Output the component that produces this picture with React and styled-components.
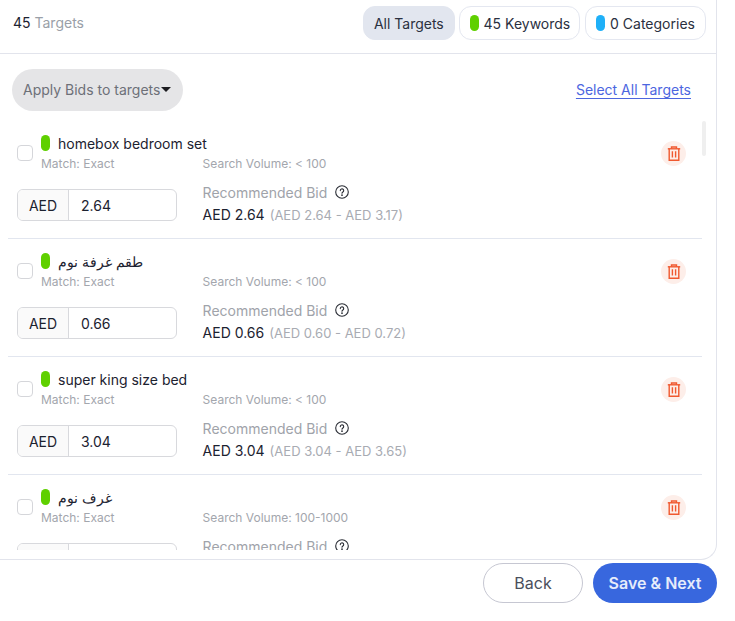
import React from "react";
import styled, { createGlobalStyle } from "styled-components";

const Global = createGlobalStyle`
  html, body { margin: 0; padding: 0; background: #fff; }
  * { box-sizing: border-box; }
  body { font-family: Inter, "Noto Sans", "Liberation Sans", sans-serif; color: #1c2230; overflow: hidden; }
`;

const Page = styled.div`
  width: 735px;
  height: 621px;
`;

const Panel = styled.div`
  width: 717px;
  height: 560px;
  display: flex;
  flex-direction: column;
  padding-bottom: 9px;
  border-right: 1px solid #e2e4ec;
  border-bottom: 1px solid #e2e4ec;
  border-bottom-right-radius: 16px;
  overflow: hidden;
  position: relative;
`;

const Header = styled.div`
  height: 54px;
  flex: none;
  display: flex;
  align-items: flex-start;
  justify-content: space-between;
  padding: 6px 10px 0 13px;
  border-bottom: 1px solid #e2e4ec;
`;

const Count = styled.div`
  font-size: 14px;
  line-height: 34px;
  color: #1c2230;
  span { color: #9a9fa8; }
`;

const Tabs = styled.div`
  display: flex;
  gap: 4.6px;
`;

const Tab = styled.div`
  height: 34px;
  width: ${(p) => p.$w}px;
  display: flex;
  align-items: center;
  justify-content: center;
  gap: 5px;
  font-size: 14px;
  border-radius: 12px;
  color: #2a3040;
  background: ${(p) => (p.$active ? "#e2e6ef" : "#fff")};
  border: 1px solid ${(p) => (p.$active ? "#e2e6ef" : "#e4e7f0")};
`;

const Dot = styled.i`
  display: block;
  flex: none;
  width: 9px;
  height: 16px;
  border-radius: 5px;
  background: ${(p) => p.$c};
`;

const Toolbar = styled.div`
  height: 67px;
  flex: none;
  display: flex;
  align-items: center;
  justify-content: space-between;
  padding: 4px 25px 0 12px;
`;

const ApplyButton = styled.div`
  width: 171px;
  height: 42px;
  border-radius: 21px;
  background: #e5e5e7;
  display: flex;
  align-items: center;
  padding-left: 11px;
  font-size: 14px;
  color: #6d7078;
`;

const Caret = styled.span`
  width: 0;
  height: 0;
  margin-left: 1px;
  border-left: 5px solid transparent;
  border-right: 5px solid transparent;
  border-top: 5px solid #1c1c20;
`;

const SelectAll = styled.a`
  font-size: 14px;
  color: #4c66df;
  text-decoration: underline;
  text-underline-offset: 3px;
`;

const List = styled.div`
  flex: 1;
  min-height: 0;
  overflow: hidden;
  padding-left: 8px;
`;

const Row = styled.div`
  width: 694px;
  height: 118px;
  flex: none;
  display: flex;
  justify-content: space-between;
  padding: 11px 16px 0 9px;
  border-bottom: 1px solid #e2e6ef;
`;

const RowMain = styled.div`
  display: flex;
  flex-direction: column;
`;

const TopBlock = styled.div`
  display: flex;
  gap: 8px;
`;

const Checkbox = styled.span`
  width: 16px;
  height: 16px;
  margin-top: 13px;
  border: 1px solid #d5d6da;
  border-radius: 4px;
  background: #fff;
`;

const NameLine = styled.div`
  display: flex;
  align-items: center;
  gap: 8px;
  height: 22px;
  font-size: 14px;
  color: #1c2230;
`;

const Meta = styled.div`
  display: grid;
  grid-template-columns: 161.6px auto;
  margin-top: 1px;
  font-size: 12px;
  line-height: 18px;
  color: #a3a6ad;
`;

const BottomBlock = styled.div`
  display: flex;
  gap: 25.6px;
  margin-top: 9px;
`;

const BidInput = styled.div`
  width: 160px;
  height: 32px;
  margin-top: 7px;
  display: flex;
  border: 1px solid #d8d9dd;
  border-radius: 6px;
  font-size: 14px;
  overflow: hidden;
`;

const Prefix = styled.div`
  width: 51px;
  display: flex;
  align-items: center;
  justify-content: center;
  background: #fafafa;
  border-right: 1px solid #d8d9dd;
  color: #1c2230;
`;

const Value = styled.div`
  flex: 1;
  display: flex;
  align-items: center;
  padding-left: 12px;
  color: #1c2230;
`;

const RecBlock = styled.div`
  display: flex;
  flex-direction: column;
`;

const RecTitle = styled.div`
  display: flex;
  align-items: center;
  gap: 8px;
  height: 20px;
  font-size: 14px;
  color: #a0a3aa;
`;

const RecValue = styled.div`
  display: flex;
  align-items: baseline;
  gap: 5px;
  height: 24px;
  margin-top: 1px;
  line-height: 24px;
  font-size: 14px;
  color: #1c2230;
  span { font-size: 13px; color: #a8abb2; }
`;

const TrashButton = styled.div`
  width: 25px;
  height: 25px;
  margin-top: 9px;
  border-radius: 50%;
  background: #fdeee9;
  display: flex;
  align-items: center;
  justify-content: center;
`;

const ScrollThumb = styled.div`
  position: absolute;
  left: 702px;
  top: 121px;
  width: 4px;
  height: 35px;
  border-radius: 2px;
  background: #efefef;
`;

const Footer = styled.div`
  display: flex;
  justify-content: flex-end;
  gap: 10px;
  width: 717px;
  padding-top: 3px;
`;

const BackButton = styled.div`
  width: 100px;
  height: 40px;
  padding-bottom: 1px;
  border-radius: 20px;
  border: 1px solid #c6c7d2;
  display: flex;
  align-items: center;
  justify-content: center;
  font-size: 16px;
  color: #4a4f5c;
`;

const NextButton = styled.div`
  width: 124px;
  height: 40px;
  padding-bottom: 1px;
  border-radius: 20px;
  background: #3867de;
  display: flex;
  align-items: center;
  justify-content: center;
  font-size: 16px;
  font-weight: 600;
  color: #e6ecfb;
`;

const TrashIcon = () => (
  <svg width="14" height="15" viewBox="0 0 14 15" fill="none" stroke="#f0582f" strokeWidth="1.4">
    <path d="M.8 2.8h12.4" />
    <path d="M4.5 2.8V1h5v1.8" />
    <path d="M2.2 2.8v11.4h9.6V2.8" />
    <path d="M5.4 5.2v6.4M8.6 5.2v6.4" />
  </svg>
);

const HelpIcon = () => (
  <svg width="14" height="14" viewBox="0 0 14 14" fill="none" stroke="#2a2d35" strokeWidth="1.1">
    <circle cx="7" cy="7" r="6.3" />
    <path d="M5.3 5.6a1.7 1.7 0 1 1 2.6 1.4c-.6.4-.9.7-.9 1.3" strokeLinecap="round" />
    <circle cx="7" cy="10.2" r=".35" />
  </svg>
);

const rows = [
  { name: "homebox bedroom set", vol: "< 100", bid: "2.64", rec: "AED 2.64", range: "(AED 2.64 - AED 3.17)" },
  { name: "طقم غرفة نوم", vol: "< 100", bid: "0.66", rec: "AED 0.66", range: "(AED 0.60 - AED 0.72)" },
  { name: "super king size bed", vol: "< 100", bid: "3.04", rec: "AED 3.04", range: "(AED 3.04 - AED 3.65)" },
  { name: "غرف نوم", vol: "100-1000", bid: "", rec: "", range: "" },
];

export default function App() {
  return (
    <Page>
      <Global />
      <Panel>
        <Header>
          <Count>45 <span>Targets</span></Count>
          <Tabs>
            <Tab $active $w={92}>All Targets</Tab>
            <Tab $w={121}><Dot $c="#5fd000" />45 Keywords</Tab>
            <Tab $w={121}><Dot $c="#1fb0f8" />0 Categories</Tab>
          </Tabs>
        </Header>
        <Toolbar>
          <ApplyButton>Apply Bids to targets<Caret /></ApplyButton>
          <SelectAll>Select All Targets</SelectAll>
        </Toolbar>
        <List>
          {rows.map((r) => (
            <Row key={r.name}>
              <RowMain>
                <TopBlock>
                  <Checkbox />
                  <div>
                    <NameLine><Dot $c="#5fd000" /><bdi>{r.name}</bdi></NameLine>
                    <Meta>
                      <div>Match: Exact</div>
                      <div>Search Volume: {r.vol}</div>
                    </Meta>
                  </div>
                </TopBlock>
                <BottomBlock>
                  <BidInput>
                    <Prefix>{r.bid && "AED"}</Prefix>
                    <Value>{r.bid}</Value>
                  </BidInput>
                  <RecBlock>
                    <RecTitle>Recommended Bid <HelpIcon /></RecTitle>
                    <RecValue>{r.rec} <span>{r.range}</span></RecValue>
                  </RecBlock>
                </BottomBlock>
              </RowMain>
              <TrashButton><TrashIcon /></TrashButton>
            </Row>
          ))}
        </List>
        <ScrollThumb />
      </Panel>
      <Footer>
        <BackButton>Back</BackButton>
        <NextButton>Save &amp; Next</NextButton>
      </Footer>
    </Page>
  );
}
